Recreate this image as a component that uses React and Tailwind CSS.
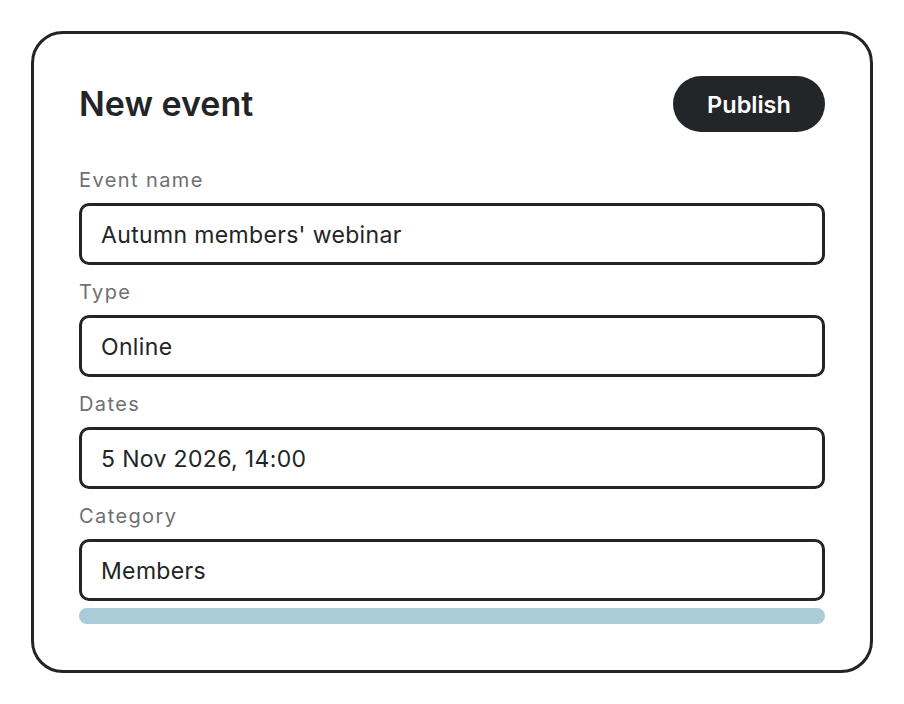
import React from 'react';

const fields = [
  { label: 'Event name', value: "Autumn members' webinar" },
  { label: 'Type', value: 'Online' },
  { label: 'Dates', value: '5 Nov 2026, 14:00' },
  { label: 'Category', value: 'Members' },
];

const App = () => {
  return (
    <div className="min-h-screen bg-white pt-[31px] pl-[31px]" style={{ fontFamily: 'Inter, "Noto Sans", sans-serif' }}>
      <div className="w-[842px] rounded-[32px] border-[3px] border-[#222426] bg-white px-[45px] pt-[42px] pb-[46px]">
        <div className="flex items-center justify-between mb-[34px]">
          <h1 className="text-[34px] font-semibold text-[#222426] leading-none">New event</h1>
          <button className="h-[56px] w-[152px] rounded-full bg-[#222628] pt-[2px] text-white text-[23.5px] font-semibold">
            Publish
          </button>
        </div>

        <div className="flex flex-col gap-[13px]">
          {fields.map((field) => (
            <div key={field.label}>
              <div className="text-[20px] leading-[28px] tracking-[0.07em] text-[#6e7072] mb-[9px]">{field.label}</div>
              <div className="h-[62px] flex items-center rounded-[10px] border-[3px] border-[#222426] pl-[19px] pt-[3px] text-[23px] tracking-[0.015em] text-[#222426]">
                {field.value}
              </div>
            </div>
          ))}
        </div>

        <div className="mt-[7px] h-[16px] rounded-full bg-[#a9ccd8]" />
      </div>
    </div>
  );
};

export default App;
